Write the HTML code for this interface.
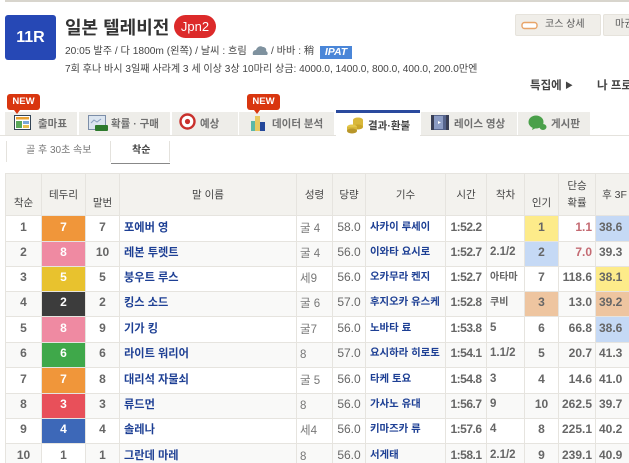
<!DOCTYPE html>
<html lang="ko"><head><meta charset="utf-8">
<style>
html,body{margin:0;padding:0;width:629px;height:463px;overflow:hidden;background:#fff}
body{font-family:"Liberation Sans","Noto Sans CJK KR",sans-serif;color:#333;position:relative;filter:blur(.25px)}
.a{position:absolute;white-space:nowrap}
.tab{position:absolute;top:112px;height:23px;background:#eeede9;color:#707070;font-size:10.5px;font-weight:bold;line-height:25px;box-sizing:border-box}
.tab span{position:absolute;top:0;white-space:nowrap}
.tab svg{position:absolute}
.new{position:absolute;top:94px;width:33px;height:16px;background:#d9360f;border-radius:3px;color:#fff;font-size:9.5px;font-weight:bold;text-align:center;line-height:16px}
.new:after{content:"";position:absolute;left:7px;top:16px;border:3px solid transparent;border-top:4px solid #d9360f;border-bottom:0}
table{position:absolute;left:5px;top:173px;border-collapse:collapse;table-layout:fixed;width:628px;font-size:12px;color:#666}
th,td{border:1px solid #e6e4df;padding:0;text-align:center;overflow:hidden;white-space:nowrap;box-sizing:border-box}
th{background:#f3f2ee;font-weight:normal;font-size:10.5px;color:#444;line-height:17px}
td{font-weight:bold;height:25px;line-height:16px;padding-bottom:4px}
tr.e td{background:#f9f9f8}
td.n,td.j{text-align:left;color:#1d3f94;padding-left:4px;padding-bottom:2px}
td.n{font-size:11.2px}
td.j{font-size:10.4px;padding-left:4px}
td.s{text-align:left;font-weight:normal;color:#777;padding-left:3px;font-size:11.5px;padding-bottom:0}
td.w{font-weight:normal;color:#666}
td.t{letter-spacing:-.5px}
td.l{text-align:left;padding-left:3px;font-size:11.5px}
td.h{font-size:10px;padding-bottom:2px}
td.r{text-align:right;padding-right:3px}
td.f{text-align:left;padding-left:3px}
td.g{color:#fff}
.y{background:#fdeb8a!important}.b{background:#c5d9f5!important}.o{background:#eec5a0!important}
.red{color:#c46a72}
th.top{vertical-align:top;padding-top:13px}
th.bot{vertical-align:bottom;padding-bottom:3px}
</style></head><body>
<div class="a" style="left:5px;top:0;width:624px;height:2px;background:#d8d5cd"></div>
<div class="a" style="left:5px;top:15px;width:51px;height:45px;background:#2648b5;border-radius:3px;color:#fff;font-size:16px;font-weight:bold;text-align:center;line-height:45px">11R</div>
<div class="a" style="left:65px;top:14px;font-size:18px;font-weight:bold;line-height:28px;color:#333">일본 텔레비전</div>
<div class="a" style="left:174px;top:15px;width:42px;height:23px;background:#dc2a2a;border-radius:12px;color:#fff;font-size:13px;text-align:center;line-height:23px">Jpn2</div>
<div class="a" style="left:65px;top:44px;font-size:10.2px;line-height:16px;color:#444">20:05 발주 / 다 1800m (왼쪽) / 날씨 : 흐림</div>
<svg class="a" style="left:252px;top:43px" width="17" height="14" viewBox="0 0 17 14"><path d="M1 12c-1-3 1-5 3-5 1-3 4-5 7-3 2 0 4 2 3 4 2 1 2 3 1 4z" fill="#7f929f"/></svg>
<div class="a" style="left:271px;top:44px;font-size:10.2px;line-height:16px;color:#444">/ 바바 : 稍</div>
<div class="a" style="left:320px;top:46px;width:32px;height:13px;background:#4a86d8;color:#fff;font-size:10.5px;font-weight:bold;font-style:italic;text-align:center;line-height:13px">IPAT</div>
<div class="a" style="left:65px;top:62px;font-size:10.08px;line-height:16px;color:#444">7회 후나 바시 3일째 사라계 3 세 이상 3상 10마리 상금: 4000.0, 1400.0, 800.0, 400.0, 200.0만엔</div>
<div class="a" style="left:515px;top:14px;width:86px;height:22px;background:#f0eee9;border:1px solid #e6e3dc;box-sizing:border-box;border-radius:2px;font-size:10px;line-height:20px;color:#555;padding-left:29px">코스 상세</div>
<svg class="a" style="left:520px;top:21px" width="20" height="9" viewBox="0 0 20 9"><rect x="2" y="1.5" width="15" height="6" rx="2.5" fill="#fff" stroke="#e8a468" stroke-width="1.4"/></svg>
<div class="a" style="left:603px;top:14px;width:40px;height:22px;background:#f0eee9;border:1px solid #e6e3dc;box-sizing:border-box;border-radius:2px;font-size:10px;line-height:20px;color:#555;padding-left:11px">마권</div>
<div class="a" style="left:530px;top:78px;font-size:11.5px;font-weight:bold;line-height:16px;color:#444">특집에 <span style="font-size:8px;vertical-align:1px">▶</span></div>
<div class="a" style="left:597px;top:78px;font-size:11.5px;font-weight:bold;line-height:16px;color:#444">나 프로</div>

<div class="a" style="left:0;top:135px;width:629px;height:1px;background:#e4e2dd"></div>
<div class="tab" style="left:5px;width:72px"><svg style="left:9px;top:3px" width="17" height="15" viewBox="0 0 17 15"><rect x=".5" y=".5" width="16" height="14" fill="#fff" stroke="#345"/><rect x="2" y="2" width="13" height="2.5" fill="#e8a030"/><rect x="2" y="6" width="6" height="7" fill="#5aa85a"/><rect x="9" y="6" width="6" height="3" fill="#7aa8d8"/><rect x="9" y="10" width="6" height="3" fill="#e8c050"/></svg><span style="left:33px">출마표</span></div>
<div class="tab" style="left:79px;width:91px"><svg style="left:9px;top:3px" width="20" height="17" viewBox="0 0 20 17"><rect x=".5" y=".5" width="17" height="14" fill="#dbe5f0" stroke="#7c8ea8"/><rect x="7" y="10" width="13" height="6" rx="1" fill="#2d7a2d"/><path d="M3 8l3-3 3 2 4-3" fill="none" stroke="#8aa0c0"/></svg><span style="left:32px">확률 · 구매</span></div>
<div class="tab" style="left:172px;width:66px"><svg style="left:7px;top:1px" width="17" height="17" viewBox="0 0 17 17"><circle cx="8.5" cy="8.5" r="7" fill="#fff" stroke="#c9302c" stroke-width="2.4"/><circle cx="8.5" cy="8.5" r="2.6" fill="#c9302c"/></svg><span style="left:28px">예상</span></div>
<div class="tab" style="left:239px;width:95px"><svg style="left:11px;top:3px" width="16" height="16" viewBox="0 0 16 16"><rect x="1" y="6" width="4" height="10" fill="#5bb8a8"/><rect x="5" y="1" width="5" height="15" fill="#e8c860"/><rect x="10" y="7" width="5" height="9" fill="#24489a"/></svg><span style="left:33px">데이터 분석</span></div>
<div class="tab" style="left:336px;top:110px;width:84px;height:26px;background:#fff;border-top:3px solid #2a4a9e;color:#444;line-height:26px"><svg style="left:10px;top:3px" width="18" height="18" viewBox="0 0 18 18"><ellipse cx="12" cy="4" rx="5" ry="2.5" fill="#d9b83a"/><rect x="7" y="4" width="10" height="7" fill="#d9b83a"/><ellipse cx="12" cy="11" rx="5" ry="2.5" fill="#c9a52a"/><ellipse cx="6" cy="11" rx="5" ry="2.5" fill="#e3c64a"/><rect x="1" y="11" width="10" height="4" fill="#d9b83a"/><ellipse cx="6" cy="15" rx="5" ry="2.5" fill="#b8962a"/></svg><span style="left:32px">결과·환불</span></div>
<div class="tab" style="left:421px;width:96px"><svg style="left:10px;top:3px" width="18" height="15" viewBox="0 0 18 15"><rect width="18" height="15" fill="#56648c"/><rect x="3" y="1" width="9" height="13" fill="#8c9cc4"/><rect width="3" height="15" fill="#3a3f55"/><rect x="15" width="3" height="15" fill="#3a3f55"/><path d="M7 6l3 1.5L7 9z" fill="#fff"/></svg><span style="left:33px">레이스 영상</span></div>
<div class="tab" style="left:518px;width:72px"><svg style="left:10px;top:3px" width="19" height="17" viewBox="0 0 19 17"><ellipse cx="8" cy="7" rx="7.5" ry="6.5" fill="#4aa04a"/><ellipse cx="15" cy="12" rx="3.5" ry="3" fill="#4aa04a"/><path d="M5 12l-1 3 4-2z" fill="#4aa04a"/></svg><span style="left:33px">게시판</span></div>
<div class="new" style="left:7px">NEW</div>
<div class="new" style="left:247px">NEW</div>

<div class="a" style="left:6px;top:141px;width:1px;height:21px;background:#e4e2dd"></div>
<div class="a" style="left:110px;top:141px;width:1px;height:21px;background:#e4e2dd"></div>
<div class="a" style="left:169px;top:141px;width:1px;height:21px;background:#e4e2dd"></div>
<div class="a" style="left:26px;top:142px;font-size:10px;line-height:17px;color:#777">골 후 30초 속보</div>
<div class="a" style="left:132px;top:142px;font-size:10px;font-weight:bold;line-height:17px;color:#444">착순</div>
<div class="a" style="left:111px;top:163px;width:59px;height:1px;background:#888"></div>

<table>
<colgroup><col style="width:36px"><col style="width:44px"><col style="width:34px"><col style="width:177px"><col style="width:36px"><col style="width:33px"><col style="width:80px"><col style="width:41px"><col style="width:38px"><col style="width:34px"><col style="width:37px"><col style="width:38px"></colgroup>
<tr style="height:42px"><th class="bot">착순</th><th class="top">테두리</th><th class="bot">말번</th><th class="top">말 이름</th><th class="top">성령</th><th class="top">당량</th><th class="top">기수</th><th class="top">시간</th><th class="top">착차</th><th class="bot">인기</th><th>단승<br>확률</th><th class="top">후 3F</th></tr>
<tr style="height:26px"><td>1</td><td class="g" style="background:#f0963a">7</td><td>7</td><td class="n">포에버 영</td><td class="s">굴 4</td><td class="w">58.0</td><td class="j">사카이 루세이</td><td class="t">1:52.2</td><td class="l"></td><td class="y">1</td><td class="r red">1.1</td><td class="f b">38.6</td></tr>
<tr class="e" style="height:25px"><td>2</td><td class="g" style="background:#ef8aa2">8</td><td>10</td><td class="n">레본 투렛트</td><td class="s">굴 4</td><td class="w">56.0</td><td class="j">이와타 요시로</td><td class="t">1:52.7</td><td class="l">2.1/2</td><td class="b">2</td><td class="r red">7.0</td><td class="f">39.3</td></tr>
<tr style="height:25px"><td>3</td><td class="g" style="background:#e8c22e">5</td><td>5</td><td class="n">붕우트 루스</td><td class="s">세9</td><td class="w">56.0</td><td class="j">오카무라 켄지</td><td class="t">1:52.7</td><td class="l h">아타마</td><td>7</td><td class="r">118.6</td><td class="f y">38.1</td></tr>
<tr class="e" style="height:25px"><td>4</td><td class="g" style="background:#3c3c3c">2</td><td>2</td><td class="n">킹스 소드</td><td class="s">굴 6</td><td class="w">57.0</td><td class="j">후지오카 유스케</td><td class="t">1:52.8</td><td class="l h">쿠비</td><td class="o">3</td><td class="r">13.0</td><td class="f o">39.2</td></tr>
<tr style="height:26px"><td>5</td><td class="g" style="background:#ef8aa2">8</td><td>9</td><td class="n">기가 킹</td><td class="s">굴7</td><td class="w">56.0</td><td class="j">노바타 료</td><td class="t">1:53.8</td><td class="l">5</td><td>6</td><td class="r">66.8</td><td class="f b">38.6</td></tr>
<tr class="e" style="height:25px"><td>6</td><td class="g" style="background:#3fa84a">6</td><td>6</td><td class="n">라이트 워리어</td><td class="s">8</td><td class="w">57.0</td><td class="j">요시하라 히로토</td><td class="t">1:54.1</td><td class="l">1.1/2</td><td>5</td><td class="r">20.7</td><td class="f">41.3</td></tr>
<tr style="height:26px"><td>7</td><td class="g" style="background:#f0963a">7</td><td>8</td><td class="n">대리석 자물쇠</td><td class="s">굴 5</td><td class="w">56.0</td><td class="j">타케 토요</td><td class="t">1:54.8</td><td class="l">3</td><td>4</td><td class="r">14.6</td><td class="f">41.0</td></tr>
<tr class="e" style="height:25px"><td>8</td><td class="g" style="background:#e8505a">3</td><td>3</td><td class="n">류드먼</td><td class="s">8</td><td class="w">56.0</td><td class="j">가사노 유대</td><td class="t">1:56.7</td><td class="l">9</td><td>10</td><td class="r">262.5</td><td class="f">39.7</td></tr>
<tr style="height:25px"><td>9</td><td class="g" style="background:#3d68b8">4</td><td>4</td><td class="n">솔레나</td><td class="s">세4</td><td class="w">56.0</td><td class="j">키마즈카 류</td><td class="t">1:57.6</td><td class="l">4</td><td>8</td><td class="r">225.1</td><td class="f">40.2</td></tr>
<tr class="e" style="height:26px"><td>10</td><td style="background:#fff">1</td><td>1</td><td class="n">그란데 마레</td><td class="s">8</td><td class="w">56.0</td><td class="j">서게태</td><td class="t">1:58.1</td><td class="l">2.1/2</td><td>9</td><td class="r">239.1</td><td class="f">40.9</td></tr>
</table>
</body></html>
